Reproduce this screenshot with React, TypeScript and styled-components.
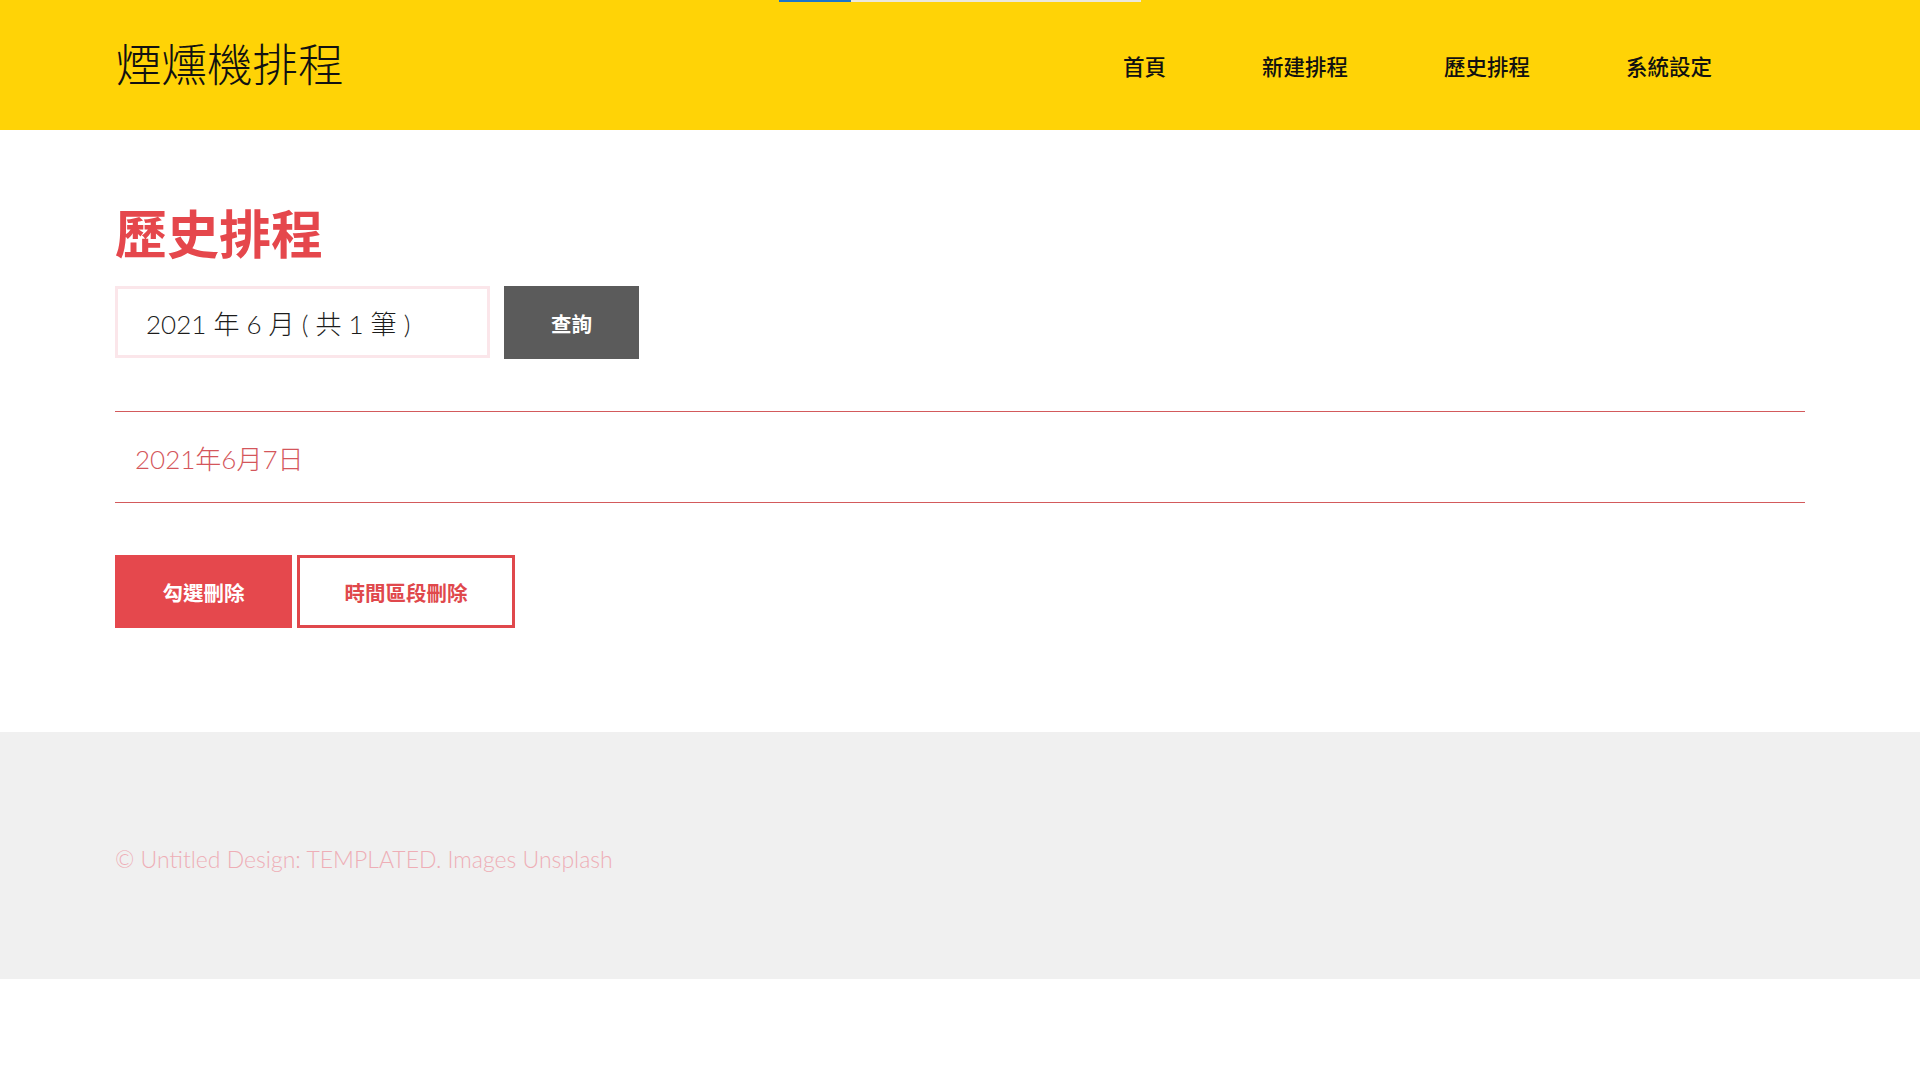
import React from 'react';
import styled, { createGlobalStyle } from 'styled-components';

const GlobalStyle = createGlobalStyle`
  html, body {
    margin: 0;
    padding: 0;
    background: #fff;
    font-family: Lato, "Noto Sans CJK TC", sans-serif;
  }
  * {
    box-sizing: border-box;
  }
`

const TopStrip = styled.div`
  position: absolute;
  top: 0;
  left: 779px;
  width: 362px;
  height: 2px;
  display: flex;
  z-index: 5;
  .done {
    width: 72px;
    background: #1b74c9;
  }
  .rest {
    flex: 1;
    background: #ebe8dc;
  }
`

const Header = styled.header`
  position: relative;
  height: 130px;
  background: #ffd306;
  display: flex;
  align-items: center;
  justify-content: space-between;
  padding: 0 208px 0 116px;
`

const Logo = styled.div`
  font-family: "Noto Sans CJK TC", sans-serif;
  font-size: 45.5px;
  font-weight: 300;
  color: #111;
  margin-top: -6px;
`

const Nav = styled.nav`
  display: flex;
  gap: 96px;
  margin-top: 0;
  a {
    font-family: "Noto Sans CJK TC", sans-serif;
    font-size: 21.5px;
    font-weight: 500;
    color: #111;
    text-decoration: none;
  }
`

const Main = styled.main`
  padding: 70px 115px 104px;
`

const Title = styled.h2`
  margin: 0 0 22px;
  font-family: "Noto Sans CJK TC", sans-serif;
  font-size: 52px;
  line-height: 64px;
  font-weight: 700;
  color: #e5474c;
`

const QueryRow = styled.div`
  display: flex;
  align-items: flex-start;
  gap: 14px;
`

const MonthSelect = styled.div`
  width: 375px;
  height: 72px;
  border: 3px solid #fbe6ea;
  display: flex;
  align-items: center;
  padding-left: 28px;
  font-family: Lato, "Noto Sans CJK TC", sans-serif;
  font-size: 26px;
  font-weight: 300;
  color: #1c1c1c;
  white-space: pre;
`

const Button = styled.button<{ $variant: 'dark' | 'red' | 'outline'; $w: number }>`
  width: ${p => p.$w}px;
  height: 73px;
  font-family: "Noto Sans CJK TC", sans-serif;
  font-size: 20.5px;
  font-weight: 700;
  cursor: pointer;
  border: ${p => p.$variant === 'outline' ? '3px solid #e0484c' : 'none'};
  background: ${p => p.$variant === 'dark' ? '#5b5b5b' : p.$variant === 'red' ? '#e5484d' : '#fff'};
  color: ${p => p.$variant === 'outline' ? '#e0484c' : '#fff'};
`

const List = styled.div`
  margin-top: 52px;
  border-top: 1.5px solid #d35a5c;
  border-bottom: 1.5px solid #d35a5c;
`

const Item = styled.div`
  height: 90px;
  display: flex;
  align-items: center;
  padding-left: 20px;
  font-family: Lato, "Noto Sans CJK TC", sans-serif;
  font-size: 26px;
  font-weight: 300;
  color: #d4565b;
`

const Actions = styled.div`
  margin-top: 52px;
  display: flex;
  gap: 5px;
`

const Footer = styled.footer`
  height: 247px;
  background: #f0f0f0;
  display: flex;
  align-items: center;
  padding: 6px 115px 0;
  font-family: Lato, sans-serif;
  font-size: 23px;
  font-weight: 300;
  color: #eeaeb6;
`

export default function App() {
  return (
    <>
      <GlobalStyle />
      <TopStrip>
        <i className="done" />
        <i className="rest" />
      </TopStrip>
      <Header>
        <Logo>煙燻機排程</Logo>
        <Nav>
          <a href="#">首頁</a>
          <a href="#">新建排程</a>
          <a href="#">歷史排程</a>
          <a href="#">系統設定</a>
        </Nav>
      </Header>
      <Main>
        <Title>歷史排程</Title>
        <QueryRow>
          <MonthSelect>{'2021 年 6 月 ( 共 1 筆 )'}</MonthSelect>
          <Button $variant="dark" $w={135}>查詢</Button>
        </QueryRow>
        <List>
          <Item>2021年6月7日</Item>
        </List>
        <Actions>
          <Button $variant="red" $w={177}>勾選刪除</Button>
          <Button $variant="outline" $w={218}>時間區段刪除</Button>
        </Actions>
      </Main>
      <Footer>© Untitled Design: TEMPLATED. Images Unsplash</Footer>
    </>
  );
}
